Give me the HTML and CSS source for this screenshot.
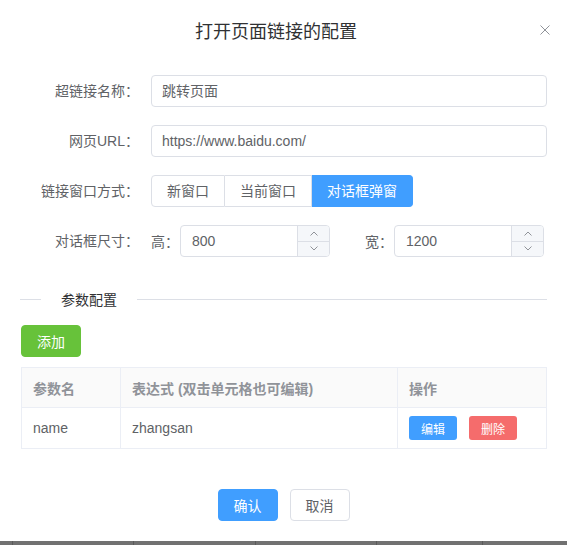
FILE: index.html
```html
<!DOCTYPE html>
<html lang="zh-CN">
<head>
  <meta charset="UTF-8" />
  <meta name="viewport" content="width=device-width, initial-scale=1.0" />
  <title>打开页面链接的配置</title>
  <link rel="stylesheet" href="styles.css">
</head>
<body>
  <div class="dialog">

    <div class="dialog-header">
      <span class="dialog-title">打开页面链接的配置</span>
      <button class="btn-close" aria-label="关闭">
        <svg width="10" height="10" viewBox="0 0 10 10">
          <path d="M0.5 0.5 L9.5 9.5 M9.5 0.5 L0.5 9.5" stroke="#909399" stroke-width="1" fill="none" />
        </svg>
      </button>
    </div>

    <div class="dialog-body">

      <div class="form-item">
        <label class="form-label">超链接名称：</label>
        <div class="form-content">
          <div class="input">跳转页面</div>
        </div>
      </div>

      <div class="form-item">
        <label class="form-label">网页URL：</label>
        <div class="form-content">
          <div class="input">https://www.baidu.com/</div>
        </div>
      </div>

      <div class="form-item">
        <label class="form-label">链接窗口方式：</label>
        <div class="form-content">
          <div class="radio-group">
            <span class="radio-btn">新窗口</span>
            <span class="radio-btn">当前窗口</span>
            <span class="radio-btn active">对话框弹窗</span>
          </div>
        </div>
      </div>

      <div class="form-item">
        <label class="form-label">对话框尺寸：</label>
        <div class="form-content">
          <div class="size-group">
            <span class="size-label">高：</span>
            <div class="input-number">
              <span class="num-value">800</span>
              <span class="num-controls">
                <span class="num-up">
                  <svg width="8" height="5" viewBox="0 0 8 5"><path d="M0.5 4.5 L4 1 L7.5 4.5" stroke="#909399" fill="none" /></svg>
                </span>
                <span class="num-down">
                  <svg width="8" height="5" viewBox="0 0 8 5"><path d="M0.5 0.5 L4 4 L7.5 0.5" stroke="#909399" fill="none" /></svg>
                </span>
              </span>
            </div>
          </div>
          <div class="size-group second">
            <span class="size-label">宽：</span>
            <div class="input-number">
              <span class="num-value">1200</span>
              <span class="num-controls">
                <span class="num-up">
                  <svg width="8" height="5" viewBox="0 0 8 5"><path d="M0.5 4.5 L4 1 L7.5 4.5" stroke="#909399" fill="none" /></svg>
                </span>
                <span class="num-down">
                  <svg width="8" height="5" viewBox="0 0 8 5"><path d="M0.5 0.5 L4 4 L7.5 0.5" stroke="#909399" fill="none" /></svg>
                </span>
              </span>
            </div>
          </div>
        </div>
      </div>

      <div class="divider">
        <span class="divider-line short"></span>
        <span class="divider-text">参数配置</span>
        <span class="divider-line"></span>
      </div>

      <button class="btn btn-success">添加</button>

      <table class="param-table">
        <thead>
          <tr>
            <th class="col-name">参数名</th>
            <th class="col-expr">表达式 (双击单元格也可编辑)</th>
            <th class="col-op">操作</th>
          </tr>
        </thead>
        <tbody>
          <tr>
            <td>name</td>
            <td>zhangsan</td>
            <td>
              <div class="ops">
                <button class="btn-mini bg-blue">编辑</button>
                <button class="btn-mini bg-red">删除</button>
              </div>
            </td>
          </tr>
        </tbody>
      </table>

    </div>

    <div class="dialog-footer">
      <button class="btn btn-primary">确认</button>
      <button class="btn btn-default">取消</button>
    </div>

  </div>

  <div class="page-strip">
    <span class="seg s1"></span>
    <span class="seg s2"></span>
    <span class="seg s3"></span>
    <span class="seg s4"></span>
    <span class="seg s5"></span>
    <span class="seg s6"></span>
  </div>
</body>
</html>
```

FILE: styles.css
```css
* {
  margin: 0;
  padding: 0;
  box-sizing: border-box;
}

body {
  margin: 0;
  background-color: #717171;
  font-family: "Liberation Sans", "Noto Sans CJK SC", sans-serif;
  font-size: 14px;
  color: #606266;
}

button {
  font-family: inherit;
  cursor: pointer;
}

/* fenêtre de dialogue */
.dialog {
  background-color: white;
  width: 567px;
  height: 541px;
  position: relative;
}

.dialog-header {
  padding: 20px 35px 10px 20px;
  text-align: center;
}

.dialog-title {
  font-size: 18px;
  line-height: 24px;
  color: #303133;
}

.btn-close {
  position: absolute;
  top: 25px;
  left: 540px;
  width: 10px;
  height: 10px;
  border: none;
  background: none;
  display: flex;
}

.dialog-body {
  padding: 21px 20px 30px 20px;
}

/* formulaire */
.form-item {
  display: flex;
  height: 32px;
  margin-bottom: 18px;
}

.form-label {
  width: 131px;
  padding-right: 12px;
  text-align: right;
  line-height: 32px;
  color: #606266;
  flex-shrink: 0;
}

.form-content {
  flex: 1;
  display: flex;
  align-items: center;
}

.input {
  width: 100%;
  height: 32px;
  border: 1px solid #dcdfe6;
  border-radius: 4px;
  padding: 0 10px;
  line-height: 30px;
  color: #606266;
}

.radio-group {
  display: flex;
  height: 32px;
}

.radio-btn {
  height: 32px;
  line-height: 30px;
  padding: 0 15px;
  border: 1px solid #dcdfe6;
  border-left: none;
  color: #606266;
  background-color: white;
}

.radio-btn:first-child {
  border-left: 1px solid #dcdfe6;
  border-radius: 4px 0 0 4px;
}

.radio-btn:last-child {
  border-radius: 0 4px 4px 0;
}

.radio-btn.active {
  background-color: #409eff;
  border-color: #409eff;
  color: white;
}

.size-group {
  display: flex;
  align-items: center;
  gap: 1px;
}

.size-group.second {
  margin-left: 35px;
}

.size-label {
  width: 28px;
  color: #606266;
}

.input-number {
  width: 150px;
  height: 32px;
  border: 1px solid #dcdfe6;
  border-radius: 4px;
  display: flex;
  overflow: hidden;
}

.num-value {
  flex: 1;
  padding-left: 11px;
  line-height: 30px;
  color: #606266;
}

.num-controls {
  width: 32px;
  display: flex;
  flex-direction: column;
  border-left: 1px solid #dcdfe6;
  background-color: #f5f7fa;
}

.num-up,
.num-down {
  flex: 1;
  display: flex;
  justify-content: center;
  align-items: center;
}

.num-up {
  border-bottom: 1px solid #dcdfe6;
}

/* séparateur */
.divider {
  display: flex;
  align-items: center;
  margin-top: 42px;
  height: 1px;
  margin-bottom: 25px;
}

.divider-line {
  flex: 1;
  height: 1px;
  background-color: #dcdfe6;
}

.divider-line.short {
  flex: 0 0 21px;
}

.divider-text {
  padding: 0 20px;
  color: #303133;
  line-height: 20px;
}

/* boutons */
.btn {
  width: 60px;
  height: 32px;
  border-radius: 4px;
  font-size: 14px;
  border: 1px solid transparent;
}

.btn-success {
  background-color: #67c23a;
  border-color: #67c23a;
  color: white;
  margin-left: 1px;
  display: block;
}

.btn-primary {
  background-color: #409eff;
  border-color: #409eff;
  color: white;
}

.btn-default {
  background-color: white;
  border-color: #dcdfe6;
  color: #606266;
}

.btn-mini {
  width: 48px;
  height: 24px;
  border: none;
  border-radius: 3px;
  font-size: 12px;
  color: white;
}

.bg-blue { background-color: #409eff; }
.bg-red { background-color: #f56c6c; }

/* tableau */
.param-table {
  margin-top: 10px;
  margin-left: 1px;
  width: 526px;
  border-collapse: collapse;
  table-layout: fixed;
}

.param-table th,
.param-table td {
  border: 1px solid #ebeef5;
  text-align: left;
  padding: 0 11px;
}

.param-table th {
  height: 40px;
  background-color: #fafafa;
  color: #909399;
  font-weight: bold;
}

.param-table td {
  height: 41px;
  color: #606266;
}

.col-name { width: 99px; }
.col-expr { width: 277px; }

.ops {
  display: flex;
  gap: 12px;
}

.dialog-footer {
  padding: 10px 20px 20px;
  display: flex;
  justify-content: center;
  gap: 12px;
}

/* bas de page */
.page-strip {
  display: flex;
  height: 4px;
}

.seg {
  height: 4px;
  border-left: 1px solid #5a5a5a;
}

.s1 { width: 12px; border-left: none; }
.s2 { width: 121px; }
.s3 { width: 122px; }
.s4 { width: 121px; }
.s5 { width: 106px; }
.s6 { flex: 1; }
```
